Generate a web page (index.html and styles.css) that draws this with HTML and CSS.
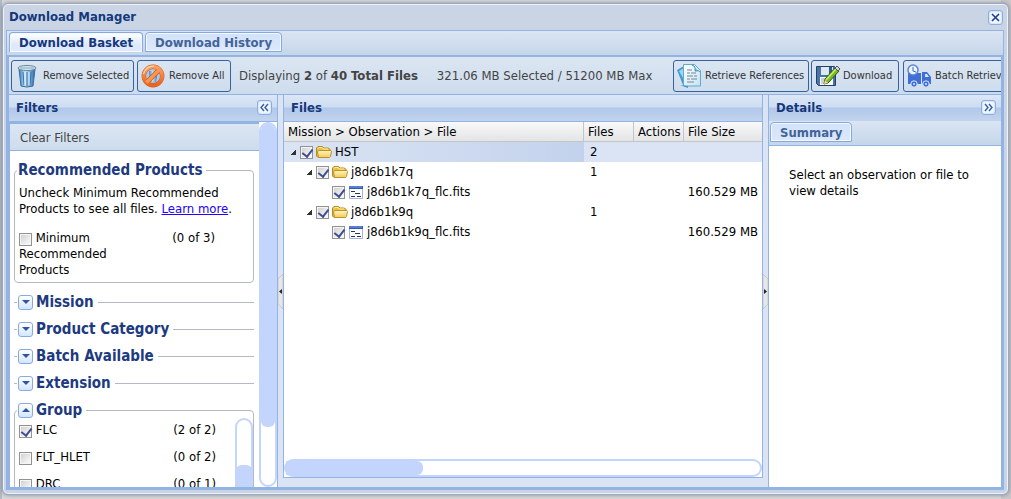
FILE: index.html
```
<!DOCTYPE html>
<html lang="en">
<head>
<meta charset="utf-8">
<title>Download Manager</title>
<link rel="stylesheet" href="styles.css">
</head>
<body>
<svg class="defs" width="0" height="0" aria-hidden="true">
  <defs>
    <linearGradient id="blue" x1="0" x2="1" y1="0" y2="0"><stop offset="0" stop-color="#3f7dbb"/><stop offset=".4" stop-color="#c4e2f4"/><stop offset="1" stop-color="#2d69aa"/></linearGradient>
    <linearGradient id="orange" x1="0" x2="0" y1="0" y2="1"><stop offset="0" stop-color="#ffa25e"/><stop offset="1" stop-color="#e86420"/></linearGradient>
    <linearGradient id="paper" x1="0" x2="1" y1="0" y2="1"><stop offset="0" stop-color="#fff"/><stop offset="1" stop-color="#c2e2f5"/></linearGradient>
    <linearGradient id="yellow" x1="0" x2="0" y1="0" y2="1"><stop offset="0" stop-color="#fff6bd"/><stop offset="1" stop-color="#f3cb5c"/></linearGradient>
    <symbol id="folder" viewBox="0 0 16 16"><path d="M.5 12V4L2 2.500h4.500L8 4h4.500L14 5.500V12l-1 1.500H2z" fill="#eebf45" stroke="#b58a20"/><path d="M2.500 13.500 1.500 7.500 3 6.500h12l.5 1-1 5-1 1z" fill="url(#yellow)" stroke="#bd922b"/><path d="M2 4.500 3 3.500h3L7.500 5H12" fill="none" stroke="#fff2b0"/></symbol>
    <symbol id="file" viewBox="0 0 16 16"><path d="M1.500 2.500h13v12h-13z" fill="#fff" stroke="#a3b4d6"/><path d="M1 2h14v3H1z" fill="#3159b8"/><path d="M1 3h13" stroke="#7fa5ee"/><path d="M3 7.500h4M7 9.500h5M3 12.500h4M9 12.500h4" stroke="#20345f"/></symbol>
  </defs>
</svg>
<div class="window">
  <header class="titlebar"><h1>Download Manager</h1><button class="tool" aria-label="Close"><svg viewBox="0 0 13 13"><path d="M3 3l7 7M10 3l-7 7" stroke="#1d3c9a" stroke-width="1.600"/></svg></button></header>
  <div class="body">
    <nav class="tabs"><button class="tab active">Download Basket</button><button class="tab">Download History</button></nav>
    <div class="content">
      <div class="toolbar">
        <button class="action remove"><svg viewBox="0 0 24 24"><path d="M4 5h16l-2 17q-6 2-12 0z" fill="url(#blue)" stroke="#386a9c"/><path d="M8 8l1 13M12 8v14M16 8l-1 13" stroke="#3674b5" stroke-width="1"/><path d="M10 8v13M14 8v13" stroke="#dff3fd"/><ellipse cx="12" cy="4" rx="9" ry="2.500" fill="#d6ebf3" stroke="#64859b"/><path d="M5 4h14" stroke="#83a6b8"/></svg>Remove Selected</button>
        <button class="action remove-all"><svg viewBox="0 0 24 24"><circle cx="12" cy="12" r="9" fill="#a9caea"/><path d="M8 7h9l-2 11H9z" fill="url(#blue)"/><circle cx="12" cy="12" r="9.200" fill="none" stroke="#c9581f" stroke-width="4.400"/><path d="M5.500 18.500l13-13" stroke="#c9581f" stroke-width="4.600"/><circle cx="12" cy="12" r="9.200" fill="none" stroke="url(#orange)" stroke-width="3.400"/><path d="M5.500 18.500l13-13" stroke="#ff9550" stroke-width="3.400"/><path d="M2.500 10Q5 2 13 2" fill="none" stroke="#ffd9b8" stroke-width="1.200"/></svg>Remove All</button>
        <p class="status">Displaying <b>2</b> of <b>40 Total Files</b></p>
        <p class="status size">321.06 MB Selected / 51200 MB Max</p>
        <div class="right-actions">
          <button class="action refs"><svg viewBox="0 0 24 24"><path d="M0 6l7-4 4 20-5-1z" fill="#459bd0"/><path d="M2 7l5-3 3 17z" fill="#9bd5f2"/><path d="M6.500.5h11l6 6V22h-17z" fill="url(#paper)" stroke="#65aacd"/><path d="M15 1q4 1 3 6 4-1 5 1" fill="#7bc6e7" stroke="#3990ba"/><path d="M10 6h5M10 9h3m1 0h5M10 12h6m1 0h3M10 15h3m1 0h6M10 18h7" stroke="#7a8790"/><path d="M3 21l8 3v-2z" fill="#3f9acf"/></svg>Retrieve References</button>
          <button class="action down"><svg viewBox="0 0 24 24"><path d="M1.500 2.500h18l1 1v18h-17l-2-2z" fill="#4774a4" stroke="#233f6c"/><path d="M6 3h12v8H6z" fill="#dfe8f0"/><path d="M14 3h3v7h-3z" fill="#315886"/><path d="M5 13h13v8H5z" fill="#fafafa"/><path d="M6 15h10M6 17h8M6 19h6" stroke="#9da6af"/><path d="M9 20l1-5L20 4l4 3-11 12z" fill="#78bb25" stroke="#365b1b"/><path d="M11 16L21 5" stroke="#ccf06c" stroke-width="1.500"/><path d="M9 20l1-4 3 3z" fill="#f4d89b"/><path d="M20 4l2-2 3 3-2 2z" fill="#d7d9d8" stroke="#555"/></svg>Download</button>
          <button class="action batch"><svg viewBox="0 0 24 24"><path d="M1 9h13v11H1zM15 8h5l4 5v7h-9z" fill="#3f6ed5"/><path d="M18 10h2l2 3h-4z" fill="#d5e2f4"/><circle cx="6" cy="6" r="5" fill="#eef5ff" stroke="#5b84dd" stroke-width="1.500"/><path d="M6 3v4l3 1" fill="none" stroke="#3667cd"/><circle cx="7" cy="20" r="3.200" fill="#3f6ed5" stroke="#dce8fa"/><circle cx="19" cy="20" r="3.200" fill="#3f6ed5" stroke="#dce8fa"/><circle cx="7" cy="20" r="1" fill="#dce8fa"/><circle cx="19" cy="20" r="1" fill="#dce8fa"/></svg>Batch Retrieval</button>
        </div>
      </div>
      <main class="columns">
        <section class="filters">
          <div class="panel-head"><h2>Filters</h2><button class="tool" aria-label="Collapse filters"><svg viewBox="0 0 13 13"><path d="M6 3L3 6.500 6 10M10 3L7 6.500 10 10" fill="none" stroke="#315fa5" stroke-width="1.400"/></svg></button></div>
          <div class="filter-body">
            <div class="filter-main">
              <button class="clear">Clear Filters</button>
              <div class="filter-list">
                <fieldset class="recommended"><legend>Recommended Products</legend>
                  <p>Uncheck Minimum Recommended Products to see all files. <a href="#">Learn more</a>.</p>
                  <div class="option"><label><input type="checkbox"> Minimum Recommended Products</label><span>(0 of 3)</span></div>
                </fieldset>
                <fieldset class="closed"><legend><button class="toggle" aria-label="Expand Mission"></button>Mission</legend></fieldset>
                <fieldset class="closed"><legend><button class="toggle" aria-label="Expand Product Category"></button>Product Category</legend></fieldset>
                <fieldset class="closed"><legend><button class="toggle" aria-label="Expand Batch Available"></button>Batch Available</legend></fieldset>
                <fieldset class="closed"><legend><button class="toggle" aria-label="Expand Extension"></button>Extension</legend></fieldset>
                <fieldset class="group"><legend><button class="toggle up" aria-label="Collapse Group"></button>Group</legend>
                  <div class="group-body"><div class="choices">
                    <div class="option"><label><input type="checkbox" checked> FLC</label><span>(2 of 2)</span></div>
                    <div class="option"><label><input type="checkbox"> FLT_HLET</label><span>(0 of 2)</span></div>
                    <div class="option"><label><input type="checkbox"> DRC</label><span>(0 of 1)</span></div>
                  </div><div class="mini-scroll"><i></i></div></div>
                </fieldset>
              </div>
            </div>
            <div class="vscroll"><i></i></div>
          </div>
        </section>
        <div class="splitter"><button aria-label="Collapse left panel"><svg viewBox="0 0 5 35"><path d="M5 0L0 5v25l5 5z" fill="#e7e7e7" stroke="#c9c9c9"/><path d="M4 15v5L1 17.500z" fill="#222"/></svg></button></div>
        <section class="files">
          <div class="panel-head"><h2>Files</h2></div>
          <div class="grid-area">
            <table>
              <thead><tr><th class="tree">Mission &gt; Observation &gt; File</th><th class="count">Files</th><th class="actions">Actions</th><th>File Size</th></tr></thead>
              <tbody>
                <tr class="selected"><td><div class="node"><i class="expander"></i><input type="checkbox" aria-label="HST" checked><svg><use href="#folder"/></svg>HST</div></td><td>2</td><td></td><td></td></tr>
                <tr><td><div class="node level1"><i class="expander"></i><input type="checkbox" aria-label="j8d6b1k7q" checked><svg><use href="#folder"/></svg>j8d6b1k7q</div></td><td>1</td><td></td><td></td></tr>
                <tr><td><div class="node level2"><input type="checkbox" aria-label="j8d6b1k7q_flc.fits" checked><svg><use href="#file"/></svg>j8d6b1k7q_flc.fits</div></td><td></td><td></td><td class="bytes">160.529 MB</td></tr>
                <tr><td><div class="node level1"><i class="expander"></i><input type="checkbox" aria-label="j8d6b1k9q" checked><svg><use href="#folder"/></svg>j8d6b1k9q</div></td><td>1</td><td></td><td></td></tr>
                <tr><td><div class="node level2"><input type="checkbox" aria-label="j8d6b1k9q_flc.fits" checked><svg><use href="#file"/></svg>j8d6b1k9q_flc.fits</div></td><td></td><td></td><td class="bytes">160.529 MB</td></tr>
              </tbody>
            </table>
            <div class="hscroll"><i></i></div>
          </div>
        </section>
        <div class="splitter"><button aria-label="Collapse right panel"><svg viewBox="0 0 5 35"><path d="M0 0l5 5v25l-5 5z" fill="#e7e7e7" stroke="#c9c9c9"/><path d="M1 15v5l3-2.500z" fill="#222"/></svg></button></div>
        <section class="details">
          <div class="panel-head"><h2>Details</h2><button class="tool" aria-label="Collapse details"><svg viewBox="0 0 13 13"><path d="M3 3l3 3.500L3 10M7 3l3 3.500L7 10" fill="none" stroke="#315fa5" stroke-width="1.400"/></svg></button></div>
          <nav class="subtabs"><button class="tab">Summary</button></nav>
          <p>Select an observation or file to view details</p>
        </section>
      </main>
    </div>
  </div>
</div>
</body>
</html>
```
FILE: styles.css
```
* { box-sizing: border-box; }
body { margin: 0; height: 100vh; padding: 3px 2px 4px; display: flex; overflow: hidden; background: linear-gradient(90deg, #b4bac8 0 2px, #d8d8db 2px 99%, #c9c7ca 99%); color: #000; font: 13px/16px "DejaVu Sans Condensed", "DejaVu Sans", sans-serif; }
button, input { margin: 0; font: inherit; }
button { padding: 0; }
h1, h2, p { margin: 0; }
.defs { position: absolute; }
.window { flex: 1; min-width: 0; display: flex; flex-direction: column; padding: 0 4px 4px 3px; border: 1px solid #98a9c3; border-radius: 6px; background: #c9d5e5; box-shadow: inset 0 0 0 1px #edf3fb, 0 0 4px #777c; }
.titlebar { display: flex; justify-content: space-between; align-items: center; height: 26px; padding: 0 1px 0 3px; flex: none; }
h1, h2 { color: #15387c; font-size: 13px; line-height: 16px; font-weight: bold; }
.tool { width: 15px; height: 15px; flex: none; border: 1px solid #8eaee0; border-radius: 3px; background: #f1f7ff; box-shadow: inset 0 0 2px #8fb8ee; }
.tool svg { display: block; width: 13px; height: 13px; }
.body { flex: 1; min-height: 0; display: flex; flex-direction: column; border: 1px solid #93b3e4; }
.tabs, .subtabs { display: flex; height: 25px; flex: none; gap: 2px; padding: 1px 2px 3px; background: linear-gradient(#dbe5f3, #c5d6ea); border-bottom: 2px solid #93b3e4; }
.tabs { height: 26px; }
.tab { padding: 1px 9px 0; color: #416499; font-weight: bold; background: linear-gradient(#d3e2f8, #dce8fa); border: 1px solid #83a9e0; border-radius: 4px 4px 0 0; box-shadow: inset 0 0 0 1px #f5f9ff; }
.tab.active { padding-top: 0; color: #15387c; background: linear-gradient(#fff, #dfe9fb 60%); border-bottom: 0; }
.content { flex: 1; min-height: 0; display: flex; flex-direction: column; border: solid #93b3e4; border-width: 0 2px 2px; }
.toolbar { display: flex; align-items: center; height: 37px; flex: none; gap: 3px; padding: 0 0 0 2px; overflow: hidden; background: linear-gradient(#dce6f3, #cddcec); }
.action { display: flex; align-items: center; flex: none; gap: 3px; height: 32px; padding: 0 3px; border: 1px solid #39609f; border-radius: 3px; background: transparent; color: #333; font-size: 11px; white-space: nowrap; }
.action svg { width: 24px; height: 24px; flex: none; overflow: visible; }
.remove { width: 123px; gap: 4px; }
.remove-all { width: 94px; gap: 4px; }
.status { margin-left: 5px; color: #444; font-size: 13px; white-space: nowrap; }
.size { margin-left: 16px; }
.right-actions { display: flex; flex: none; gap: 2px; width: 328px; margin-left: auto; overflow: hidden; }
.refs { width: 136px; gap: 4px; }
.down { width: 88px; gap: 4px; }
.batch { width: 125px; gap: 4px; margin-left: 2px; }
.columns { flex: 1; min-height: 0; display: grid; grid-template-columns: 269px 5px minmax(0, 1fr) 5px 233px; border-top: 1px solid #93b3e4; background: #dbe4f4; }
.panel-head { display: flex; flex: none; align-items: center; justify-content: space-between; height: 26px; padding: 0 5px 1px 7px; background: linear-gradient(#dce7f7, #cdddf2 12px, #b2c8e9 13px, #c1d4ef); }
.filters { display: flex; min-height: 0; flex-direction: column; border-right: 1px solid #93b3e4; }
.filter-body { display: flex; flex: 1; min-height: 0; border-top: 1px solid #93b3e4; background: white; }
.filter-main { display: flex; flex: 1; min-width: 0; flex-direction: column; overflow: hidden; border-left: 1px solid #93b3e4; }
.clear { height: 29px; flex: none; padding: 1px 10px 0; text-align: left; border: solid #93b3e4; border-width: 2px 0 1px; background: linear-gradient(#dce6f3, #cddcec); color: #444; }
.filter-list { flex: 1; min-height: 0; padding: 11px 5px 0 4px; overflow: hidden; }
fieldset { min-width: 0; margin: 0; padding: 0; border: 1px solid #b5b8c8; border-radius: 4px; }
legend { display: flex; align-items: center; gap: 3px; height: 16px; margin-left: 2px; padding: 0 4px 0 1px; color: #203a7f; font-size: 15px; line-height: 16px; font-weight: bold; }
.recommended { height: 121px; padding: 7px 4px 0; }
.recommended legend { margin-left: -2px; }
.option { display: flex; align-items: flex-start; }
.option label { width: 115px; }
.option input { vertical-align: -4px; margin-right: 0; }
.recommended .option { margin-top: 13px; }
.option span { margin-left: auto; margin-right: 34px; }
a { color: #20f; }
input[type="checkbox"] { appearance: none; width: 13px; height: 13px; flex: none; border: 1px solid #929292; background: linear-gradient(135deg, #cdcdcd, #fff); box-shadow: inset 0 0 0 1px #f5f5f5; }
input[type="checkbox"]:checked::after { content: ""; display: block; width: 5px; height: 8px; margin: 0 0 0 3px; border: solid #3f4e91; border-width: 0 2px 2px 0; transform: rotate(38deg); }
.closed { height: 16px; margin-top: 11px; border-width: 1px 0 0; border-radius: 0; }
.closed legend { margin-left: 3px; }
.toggle { display: grid; place-items: center; width: 15px; height: 15px; border: 1px solid #88aae0; border-radius: 3px; background: linear-gradient(#fff, #d3e6ff); }
.toggle::after { content: ""; border: solid transparent; border-width: 4px 4px 0; border-top-color: #2e559d; }
.toggle.up::after { border-width: 0 4px 4px; border-bottom-color: #2e559d; }
.group { height: 130px; margin-top: 11px; }
.group-body { display: flex; }
.choices { flex: 1; padding: 4px 0 0 4px; }
.choices .option { height: 27px; }
.choices .option span { margin-right: 19px; }
.mini-scroll { width: 18px; height: 100px; border: 2px solid #c3d5fc; border-radius: 9px; }
.mini-scroll i { display: block; height: 70px; margin: 45px -2px 0; border-radius: 7px 7px 0 0; background: #c3d5fc; }
.vscroll { width: 18px; flex: none; border: 2px solid #c3d5fc; border-radius: 9px; overflow: hidden; }
.vscroll i { display: block; height: 84%; background: #c3d5fc; border-radius: 0 0 6px 6px; }
.splitter { display: flex; align-items: center; }
.splitter button { width: 5px; height: 35px; border: 0; background: none; }
.splitter svg { display: block; width: 5px; height: 35px; }
.files { display: flex; min-width: 0; min-height: 0; flex-direction: column; margin-bottom: 9px; border: solid #93b3e4; border-width: 0 1px 1px; }
.grid-area { flex: 1; min-height: 0; display: flex; flex-direction: column; justify-content: space-between; background: white; border-top: 1px solid #93b3e4; }
table { width: 100%; table-layout: fixed; border-collapse: separate; border-spacing: 0; }
tr { height: 20px; }
th, td { padding: 0; height: 20px; white-space: nowrap; }
th { font-weight: normal; text-align: left; padding: 0 4px; border-right: 1px solid #c5c5c5; border-bottom: 1px solid #c5c5c5; background: linear-gradient(#f9f9f9, #e3e4e6); }
th:last-child { width: 78px; border-right: 0; }
.count { width: 50px; }
.actions { width: 50px; }
td:nth-child(2) { padding-left: 6px; }
.selected td { background: #dae4f4; }
.selected td:first-child { background: linear-gradient(90deg, #dae4f4, #c3d2ec); }
.node { display: flex; align-items: center; height: 20px; padding-left: 6px; gap: 3px; }
.node svg { width: 16px; height: 16px; flex: none; }
.level1 { padding-left: 22px; }
.level2 { padding-left: 48px; }
.expander { width: 6px; height: 6px; margin-right: 1px; background: linear-gradient(135deg, transparent 50%, #333 51%); }
.bytes { text-align: right; padding-right: 4px; }
.hscroll { height: 18px; flex: none; border: 2px solid #c3d5fc; border-radius: 9px; }
.hscroll i { display: block; width: 29%; height: 14px; background: #c3d5fc; border-radius: 0 6px 6px 0; }
.details { display: flex; min-width: 0; flex-direction: column; border-left: 1px solid #93b3e4; background: white; }
.details .subtabs { border-bottom-width: 1px; padding-left: 1px; }
.details > p { padding: 21px 20px; }
```
